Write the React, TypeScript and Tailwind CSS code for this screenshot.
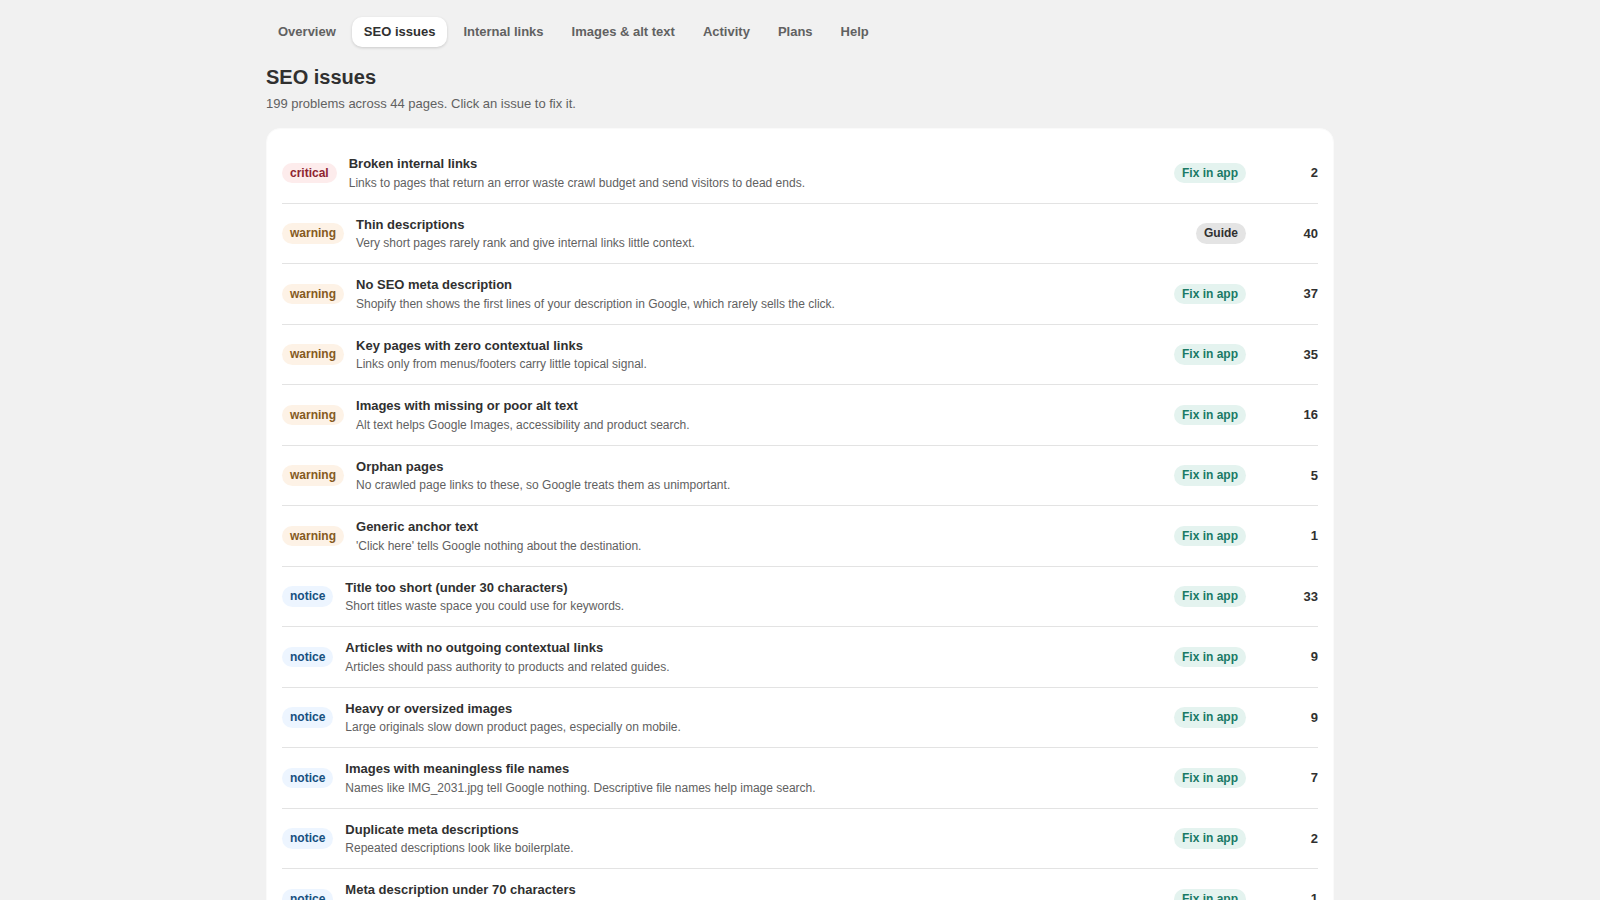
const tabs = ['Overview', 'SEO issues', 'Internal links', 'Images & alt text', 'Activity', 'Plans', 'Help'];

type Level = 'critical' | 'warning' | 'notice';

const issues: { level: Level; title: string; desc: string; action: string; count: number }[] = [
  { level: 'critical', title: 'Broken internal links', desc: 'Links to pages that return an error waste crawl budget and send visitors to dead ends.', action: 'Fix in app', count: 2 },
  { level: 'warning', title: 'Thin descriptions', desc: 'Very short pages rarely rank and give internal links little context.', action: 'Guide', count: 40 },
  { level: 'warning', title: 'No SEO meta description', desc: 'Shopify then shows the first lines of your description in Google, which rarely sells the click.', action: 'Fix in app', count: 37 },
  { level: 'warning', title: 'Key pages with zero contextual links', desc: 'Links only from menus/footers carry little topical signal.', action: 'Fix in app', count: 35 },
  { level: 'warning', title: 'Images with missing or poor alt text', desc: 'Alt text helps Google Images, accessibility and product search.', action: 'Fix in app', count: 16 },
  { level: 'warning', title: 'Orphan pages', desc: 'No crawled page links to these, so Google treats them as unimportant.', action: 'Fix in app', count: 5 },
  { level: 'warning', title: 'Generic anchor text', desc: "'Click here' tells Google nothing about the destination.", action: 'Fix in app', count: 1 },
  { level: 'notice', title: 'Title too short (under 30 characters)', desc: 'Short titles waste space you could use for keywords.', action: 'Fix in app', count: 33 },
  { level: 'notice', title: 'Articles with no outgoing contextual links', desc: 'Articles should pass authority to products and related guides.', action: 'Fix in app', count: 9 },
  { level: 'notice', title: 'Heavy or oversized images', desc: 'Large originals slow down product pages, especially on mobile.', action: 'Fix in app', count: 9 },
  { level: 'notice', title: 'Images with meaningless file names', desc: 'Names like IMG_2031.jpg tell Google nothing. Descriptive file names help image search.', action: 'Fix in app', count: 7 },
  { level: 'notice', title: 'Duplicate meta descriptions', desc: 'Repeated descriptions look like boilerplate.', action: 'Fix in app', count: 2 },
  { level: 'notice', title: 'Meta description under 70 characters', desc: 'Short descriptions leave room unused.', action: 'Fix in app', count: 1 },
];

const levelStyles: Record<Level, string> = {
  critical: 'bg-[#fdecec] text-[#8e2430]',
  warning: 'bg-[#fdf2e6] text-[#855a1e]',
  notice: 'bg-[#edf5ff] text-[#17507f]',
};

export default function App() {
  return (
    <div className="h-screen overflow-hidden bg-[#f1f1f1] font-['Liberation_Sans',Arial,sans-serif] text-[#303030]">
      <div className="mx-auto max-w-[1100px] px-4 pt-[17px]">
        <nav className="flex gap-1 mb-[17px]">
          {tabs.map((tab) => (
            <a
              key={tab}
              className={
                tab === 'SEO issues'
                  ? 'px-3 py-2 rounded-[10px] text-[13px] leading-[14px] font-bold bg-white text-[#303030] shadow-[0_1px_3px_rgba(0,0,0,0.16)]'
                  : 'px-3 py-2 rounded-[10px] text-[13px] leading-[14px] font-bold text-[#616161]'
              }
            >
              {tab}
            </a>
          ))}
        </nav>

        <h1 className="text-xl leading-[26px] font-bold mb-[5px]">SEO issues</h1>
        <p className="text-[13px] leading-[18px] text-[#616161] mb-[15px]">
          199 problems across 44 pages. Click an issue to fix it.
        </p>

        <div className="bg-white rounded-[14px] border border-[#fafafa] px-[15px] pt-[14px] pb-[15px]">
          {issues.map((issue, i) => (
            <div
              key={issue.title}
              className={`flex items-center gap-3 py-3 ${i < issues.length - 1 ? 'border-b border-[#e3e3e3]' : ''}`}
            >
              <span className={`rounded-full px-2 py-[3px] text-xs leading-[14.5px] font-bold ${levelStyles[issue.level]}`}>
                {issue.level}
              </span>
              <div className="flex-1 min-w-0">
                <div className="text-[13px] leading-[17px] font-bold mb-[3.5px]">{issue.title}</div>
                <div className="text-xs leading-[15px] text-[#616161]">{issue.desc}</div>
              </div>
              <span
                className={
                  issue.action === 'Guide'
                    ? 'rounded-full px-2 py-[3px] text-xs leading-[14.5px] font-bold bg-[#e4e4e4] text-[#303030]'
                    : 'rounded-full px-2 py-[3px] text-xs leading-[14.5px] font-bold bg-[#e4f3ef] text-[#1a7a66]'
                }
              >
                {issue.action}
              </span>
              <span className="w-[60px] text-right text-[13px] font-bold">{issue.count}</span>
            </div>
          ))}
        </div>
      </div>
    </div>
  );
}
